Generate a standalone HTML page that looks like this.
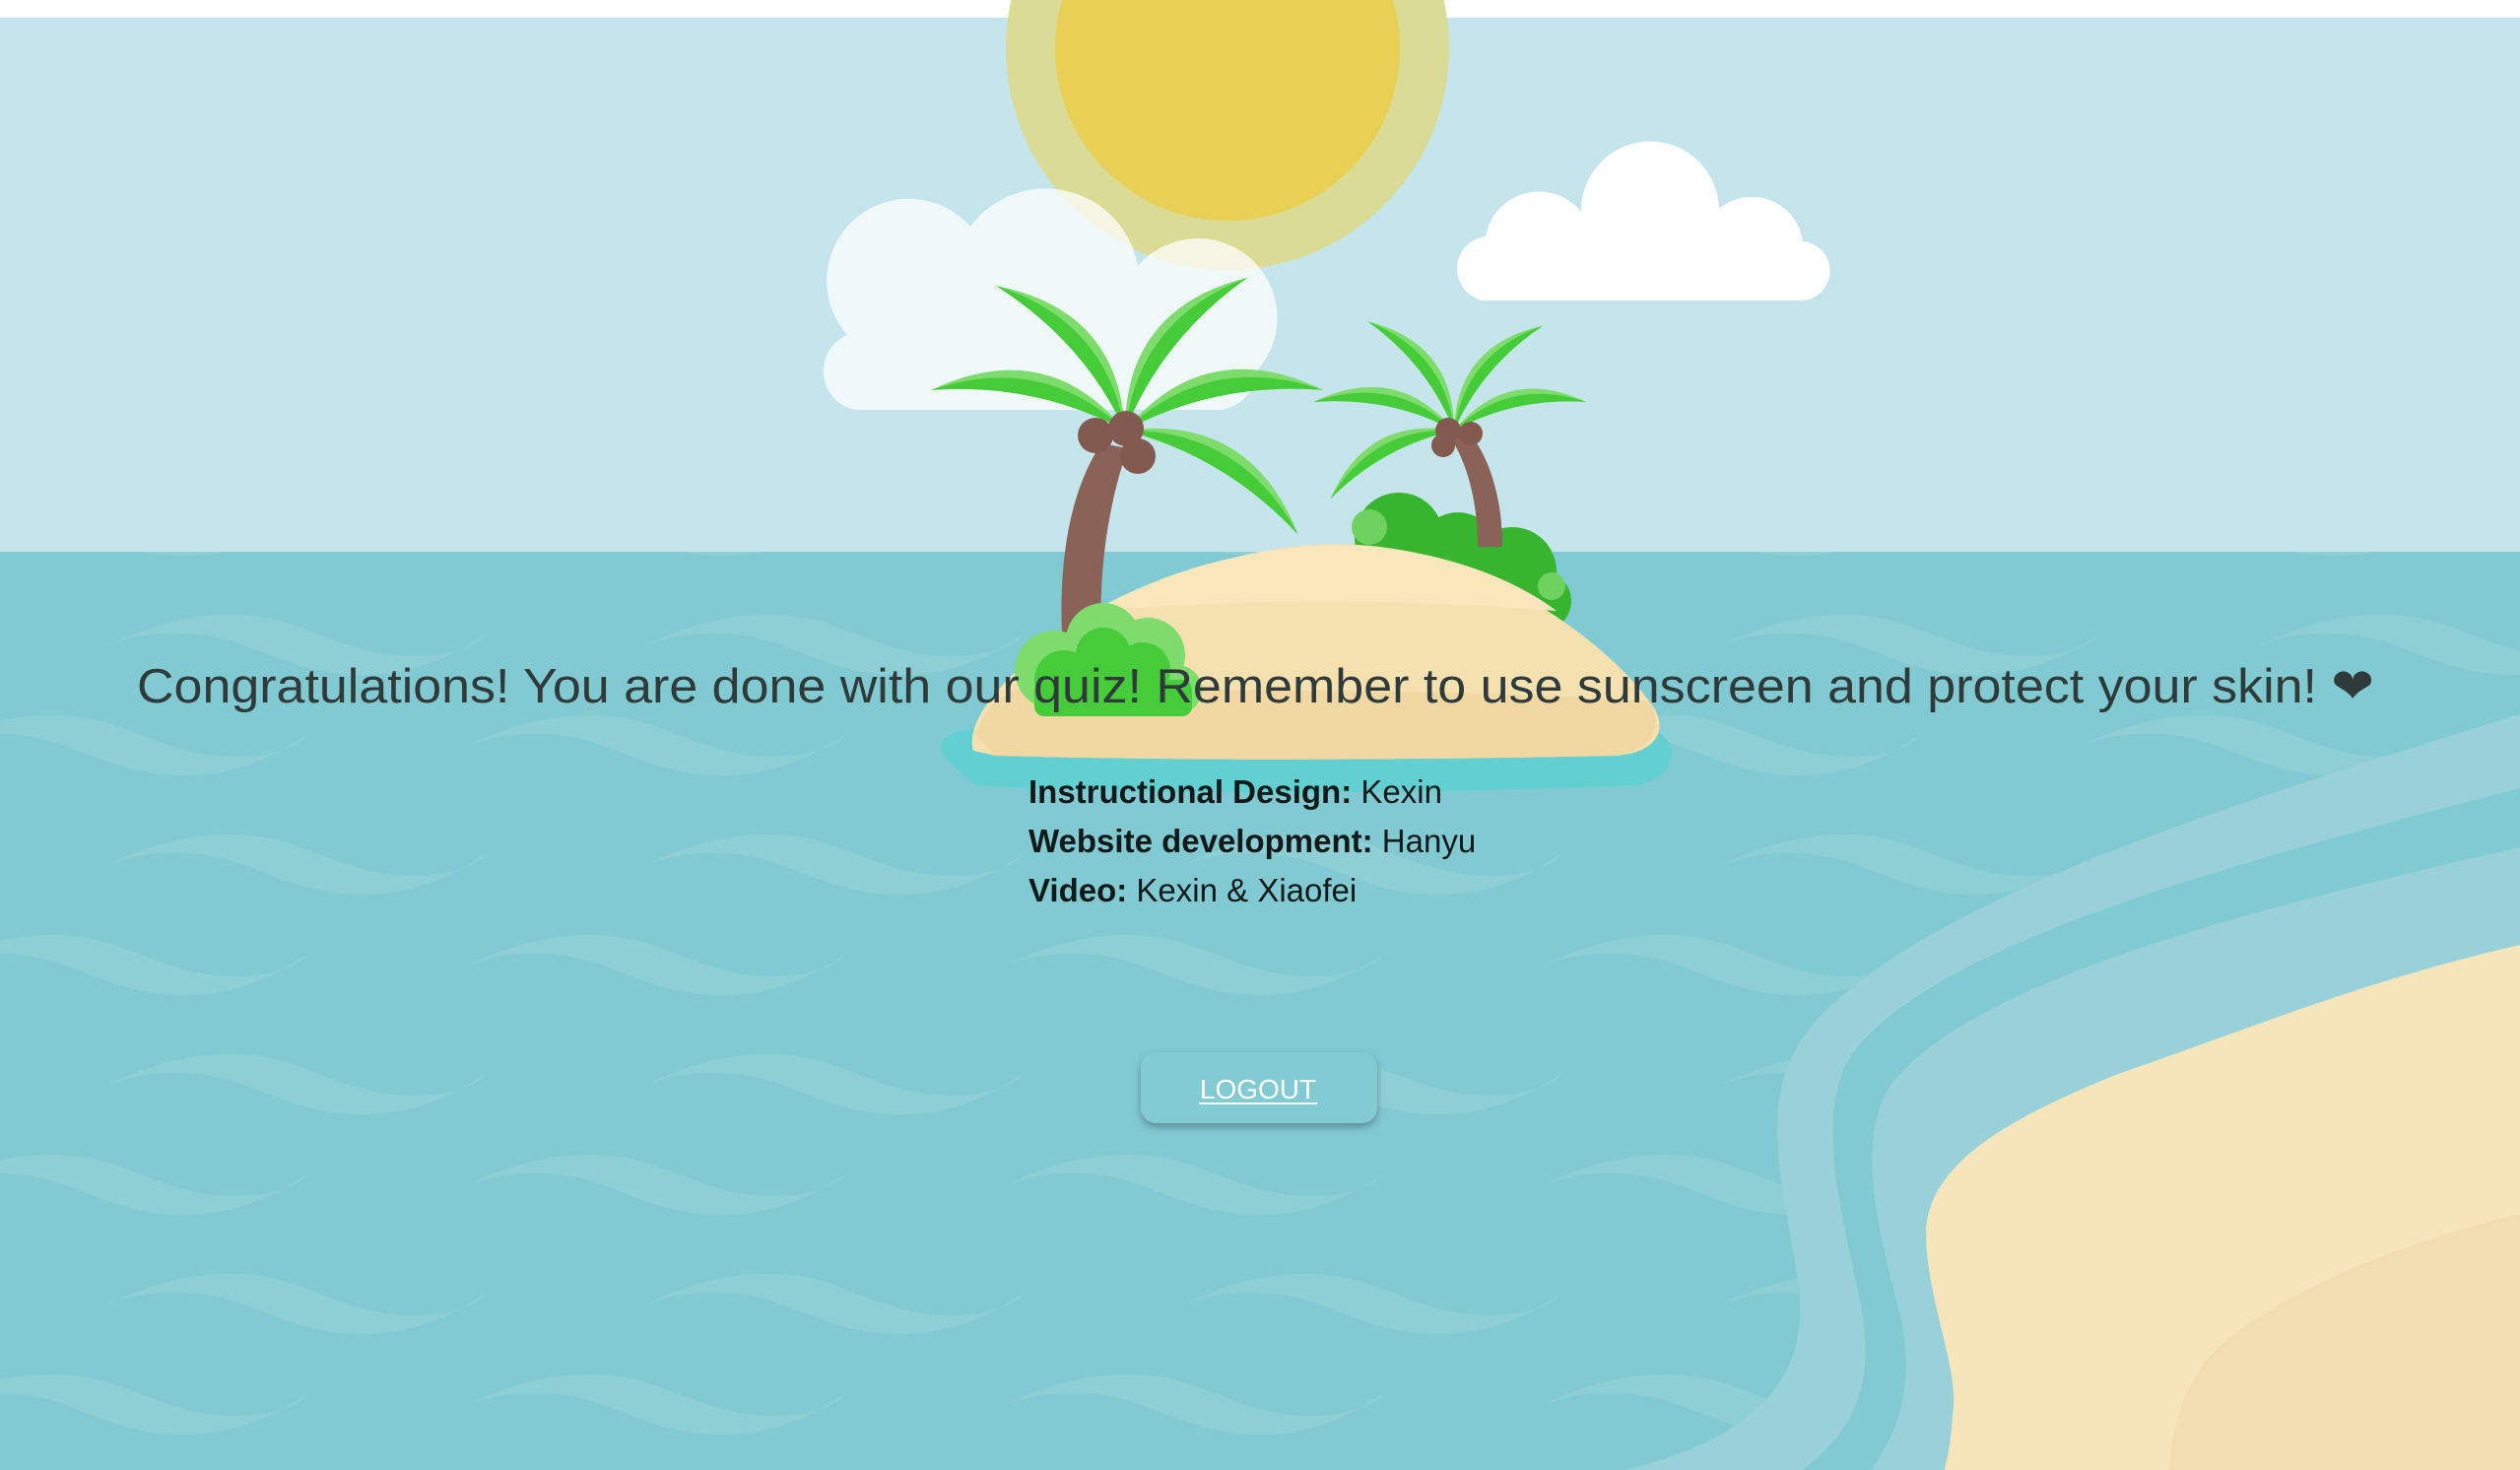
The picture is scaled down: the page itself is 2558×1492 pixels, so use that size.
<!DOCTYPE html>
<html><head><meta charset="utf-8"><style>
html,body{margin:0;padding:0;width:2558px;height:1492px;overflow:hidden;background:#fff}
svg{display:block}
</style></head><body>
<svg width="2558" height="1492" viewBox="0 0 2558 1492" xmlns="http://www.w3.org/2000/svg">
<defs>
<pattern id="waves" x="0" y="615" width="546" height="223" patternUnits="userSpaceOnUse">
 <path d="M92,50 C150,15 230,-5 300,20 C350,38 380,55 440,50 C470,47 490,35 491,30 C460,50 420,72 360,70 C300,68 260,40 220,32 C170,22 120,30 92,50Z" fill="#8dcfd4"/>
 <path d="M92,50 C150,15 230,-5 300,20 C350,38 380,55 440,50 C470,47 490,35 491,30 C460,50 420,72 360,70 C300,68 260,40 220,32 C170,22 120,30 92,50Z" fill="#8dcfd4" transform="translate(-181,102)"/>
 <path d="M92,50 C150,15 230,-5 300,20 C350,38 380,55 440,50 C470,47 490,35 491,30 C460,50 420,72 360,70 C300,68 260,40 220,32 C170,22 120,30 92,50Z" fill="#8dcfd4" transform="translate(365,102)"/>
</pattern>
<filter id="sh" x="-20%" y="-30%" width="140%" height="180%"><feDropShadow dx="0" dy="4" stdDeviation="4" flood-color="#000" flood-opacity="0.3"/></filter>
<g id="leafR"><path d="M0,0 Q100,-80 205,0 Q100,-30 0,0Z" fill="#7ddc6c"/><path d="M0,0 Q100,-62 205,0 Q100,-30 0,0Z" fill="#45cc38"/></g>
<g id="leafL"><path d="M0,0 Q100,80 205,0 Q100,30 0,0Z" fill="#7ddc6c"/><path d="M0,0 Q100,62 205,0 Q100,30 0,0Z" fill="#45cc38"/></g>
</defs>
<rect x="0" y="0" width="2558" height="18" fill="#fff"/>
<rect x="0" y="18" width="2558" height="543" fill="#c4e5eb"/>
<rect x="0" y="560" width="2558" height="932" fill="#81cad2"/>
<rect x="0" y="560" width="2558" height="932" fill="url(#waves)"/>
<!-- beach -->
<path d="M2558,725 C2250,820 1950,915 1840,1040 C1780,1110 1810,1200 1825,1300 C1840,1400 1780,1460 1650,1492 L2558,1492Z" fill="#98d2d8"/>
<path d="M2558,800 C2250,880 1960,960 1880,1070 C1840,1130 1870,1230 1890,1330 C1905,1420 1870,1460 1830,1492 L2558,1492Z" fill="#81cad2"/>
<path d="M2558,860 C2250,930 2000,1000 1920,1100 C1880,1160 1910,1260 1930,1340 C1945,1420 1920,1460 1900,1492 L2558,1492Z" fill="#98d2d8"/>
<path d="M2558,959 C2400,995 2284,1044 2150,1090 C2039,1135 1958,1180 1955,1250 C1955,1320 1990,1390 1982,1436 C1980,1470 1975,1485 1974,1492 L2558,1492Z" fill="#f6e5bb"/>
<path d="M2558,1232 C2420,1265 2317,1315 2260,1360 C2215,1400 2205,1450 2202,1492 L2558,1492Z" fill="#f2ddb0"/>
<!-- sun -->
<circle cx="1246" cy="49" r="225" fill="#dadc96"/>
<circle cx="1246" cy="49" r="175" fill="#e8d055"/>
<!-- left cloud -->
<g fill="#fff" opacity="0.75">
<path d="M868,416 A40,40 0 0 1 860,340 A82,82 0 0 1 985,230 A95,95 0 0 1 1155,270 A73,73 0 0 1 1277,375 A45,45 0 0 1 1240,416 Z"/>
</g>
<!-- right cloud -->
<path d="M1505,305 A33,33 0 0 1 1508,240 A55,55 0 0 1 1605,215 A70,70 0 0 1 1745,212 A52,52 0 0 1 1830,245 A30,30 0 0 1 1825,305 Z" fill="#fff"/>
<!-- back bush right -->
<g fill="#38b52e">
<circle cx="1420" cy="545" r="45"/><circle cx="1480" cy="560" r="40"/><circle cx="1535" cy="580" r="45"/><circle cx="1565" cy="610" r="30"/>
</g>
<g fill="#6fd25e"><circle cx="1390" cy="535" r="18"/><circle cx="1575" cy="595" r="14"/></g>
<!-- trunks -->
<path d="M1118,450 C1085,500 1075,570 1078,645 L1118,645 C1115,580 1125,510 1145,455 Z" fill="#8b6257"/>
<path d="M1470,440 C1490,470 1500,510 1500,555 L1525,555 C1525,505 1512,465 1492,440Z" fill="#8b6257"/>
<!-- island -->
<path d="M960,770 C940,745 985,735 1010,742 L1680,742 C1705,752 1705,790 1660,797 C1400,808 1100,805 990,797 Z" fill="#62d0d0"/>
<path d="M988,762 C975,720 1060,640 1180,590 C1280,550 1360,545 1430,560 C1540,585 1640,660 1680,720 C1695,750 1670,765 1640,767 C1400,772 1200,772 1010,767 Z" fill="#f5e0b0"/>
<path d="M1110,620 C1200,570 1300,548 1400,555 C1480,565 1540,590 1580,620 C1450,610 1300,605 1110,620Z" fill="#f9e6bb"/>
<path d="M990,745 C1000,720 1010,710 1030,700 C1300,700 1500,700 1675,712 C1690,740 1675,762 1640,767 C1400,772 1200,772 1010,767Z" fill="#f1d8a3"/>
<!-- front bush -->
<g fill="#7ddc6c"><circle cx="1070" cy="680" r="40"/><circle cx="1120" cy="650" r="38"/><circle cx="1165" cy="665" r="38"/><circle cx="1195" cy="700" r="25"/></g>
<g fill="#45cc38"><circle cx="1080" cy="690" r="30"/><circle cx="1120" cy="665" r="28"/><circle cx="1160" cy="680" r="28"/><rect x="1050" y="690" width="160" height="37" rx="10"/></g>
<!-- big palm leaves -->
<g transform="translate(1142,437)">
<use href="#leafL" transform="rotate(-131.7) scale(0.96)"/>
<use href="#leafR" transform="rotate(-51.3) scale(0.97)"/>
<use href="#leafL" transform="rotate(-168.2) scale(0.98)"/>
<use href="#leafR" transform="rotate(-11.6)"/>
<use href="#leafR" transform="rotate(31)"/>
</g>
<g fill="#835a4f"><circle cx="1112" cy="442" r="18"/><circle cx="1143" cy="435" r="18"/><circle cx="1155" cy="463" r="18"/></g>
<!-- small palm leaves -->
<g transform="translate(1476,437)">
<use href="#leafL" transform="rotate(-128.4) scale(0.69)"/>
<use href="#leafR" transform="rotate(-49.7) scale(0.68)"/>
<use href="#leafL" transform="rotate(-168.5) scale(0.71)"/>
<use href="#leafR" transform="rotate(-12.2) scale(0.67)"/>
<use href="#leafR" transform="rotate(151.1) scale(0.7,-0.7)"/>
</g>
<g fill="#835a4f"><circle cx="1470" cy="437" r="13"/><circle cx="1493" cy="440" r="12"/><circle cx="1465" cy="452" r="12"/></g>
<!-- heading -->
<text x="139" y="713" textLength="2271" lengthAdjust="spacingAndGlyphs" font-family="Liberation Sans, sans-serif" font-size="49" fill="#2f3b3b">Congratulations! You are done with our quiz! Remember to use sunscreen and protect your skin! ❤</text>
<!-- credits -->
<g font-family="Liberation Sans, sans-serif" font-size="33" fill="#111a1a">
<text x="1044" y="815"><tspan font-weight="bold">Instructional Design:</tspan> Kexin</text>
<text x="1044" y="865"><tspan font-weight="bold">Website development:</tspan> Hanyu</text>
<text x="1044" y="915"><tspan font-weight="bold">Video:</tspan> Kexin &amp; Xiaofei</text>
</g>
<!-- button -->
<rect x="1158" y="1068" width="240" height="72" rx="16" fill="#83cbd3" filter="url(#sh)"/>
<text x="1277" y="1115" text-anchor="middle" font-family="Liberation Sans, sans-serif" font-size="28" fill="#fff">LOGOUT</text>
<rect x="1217" y="1119" width="120" height="2" fill="#fff"/>
</svg>
</body></html>
